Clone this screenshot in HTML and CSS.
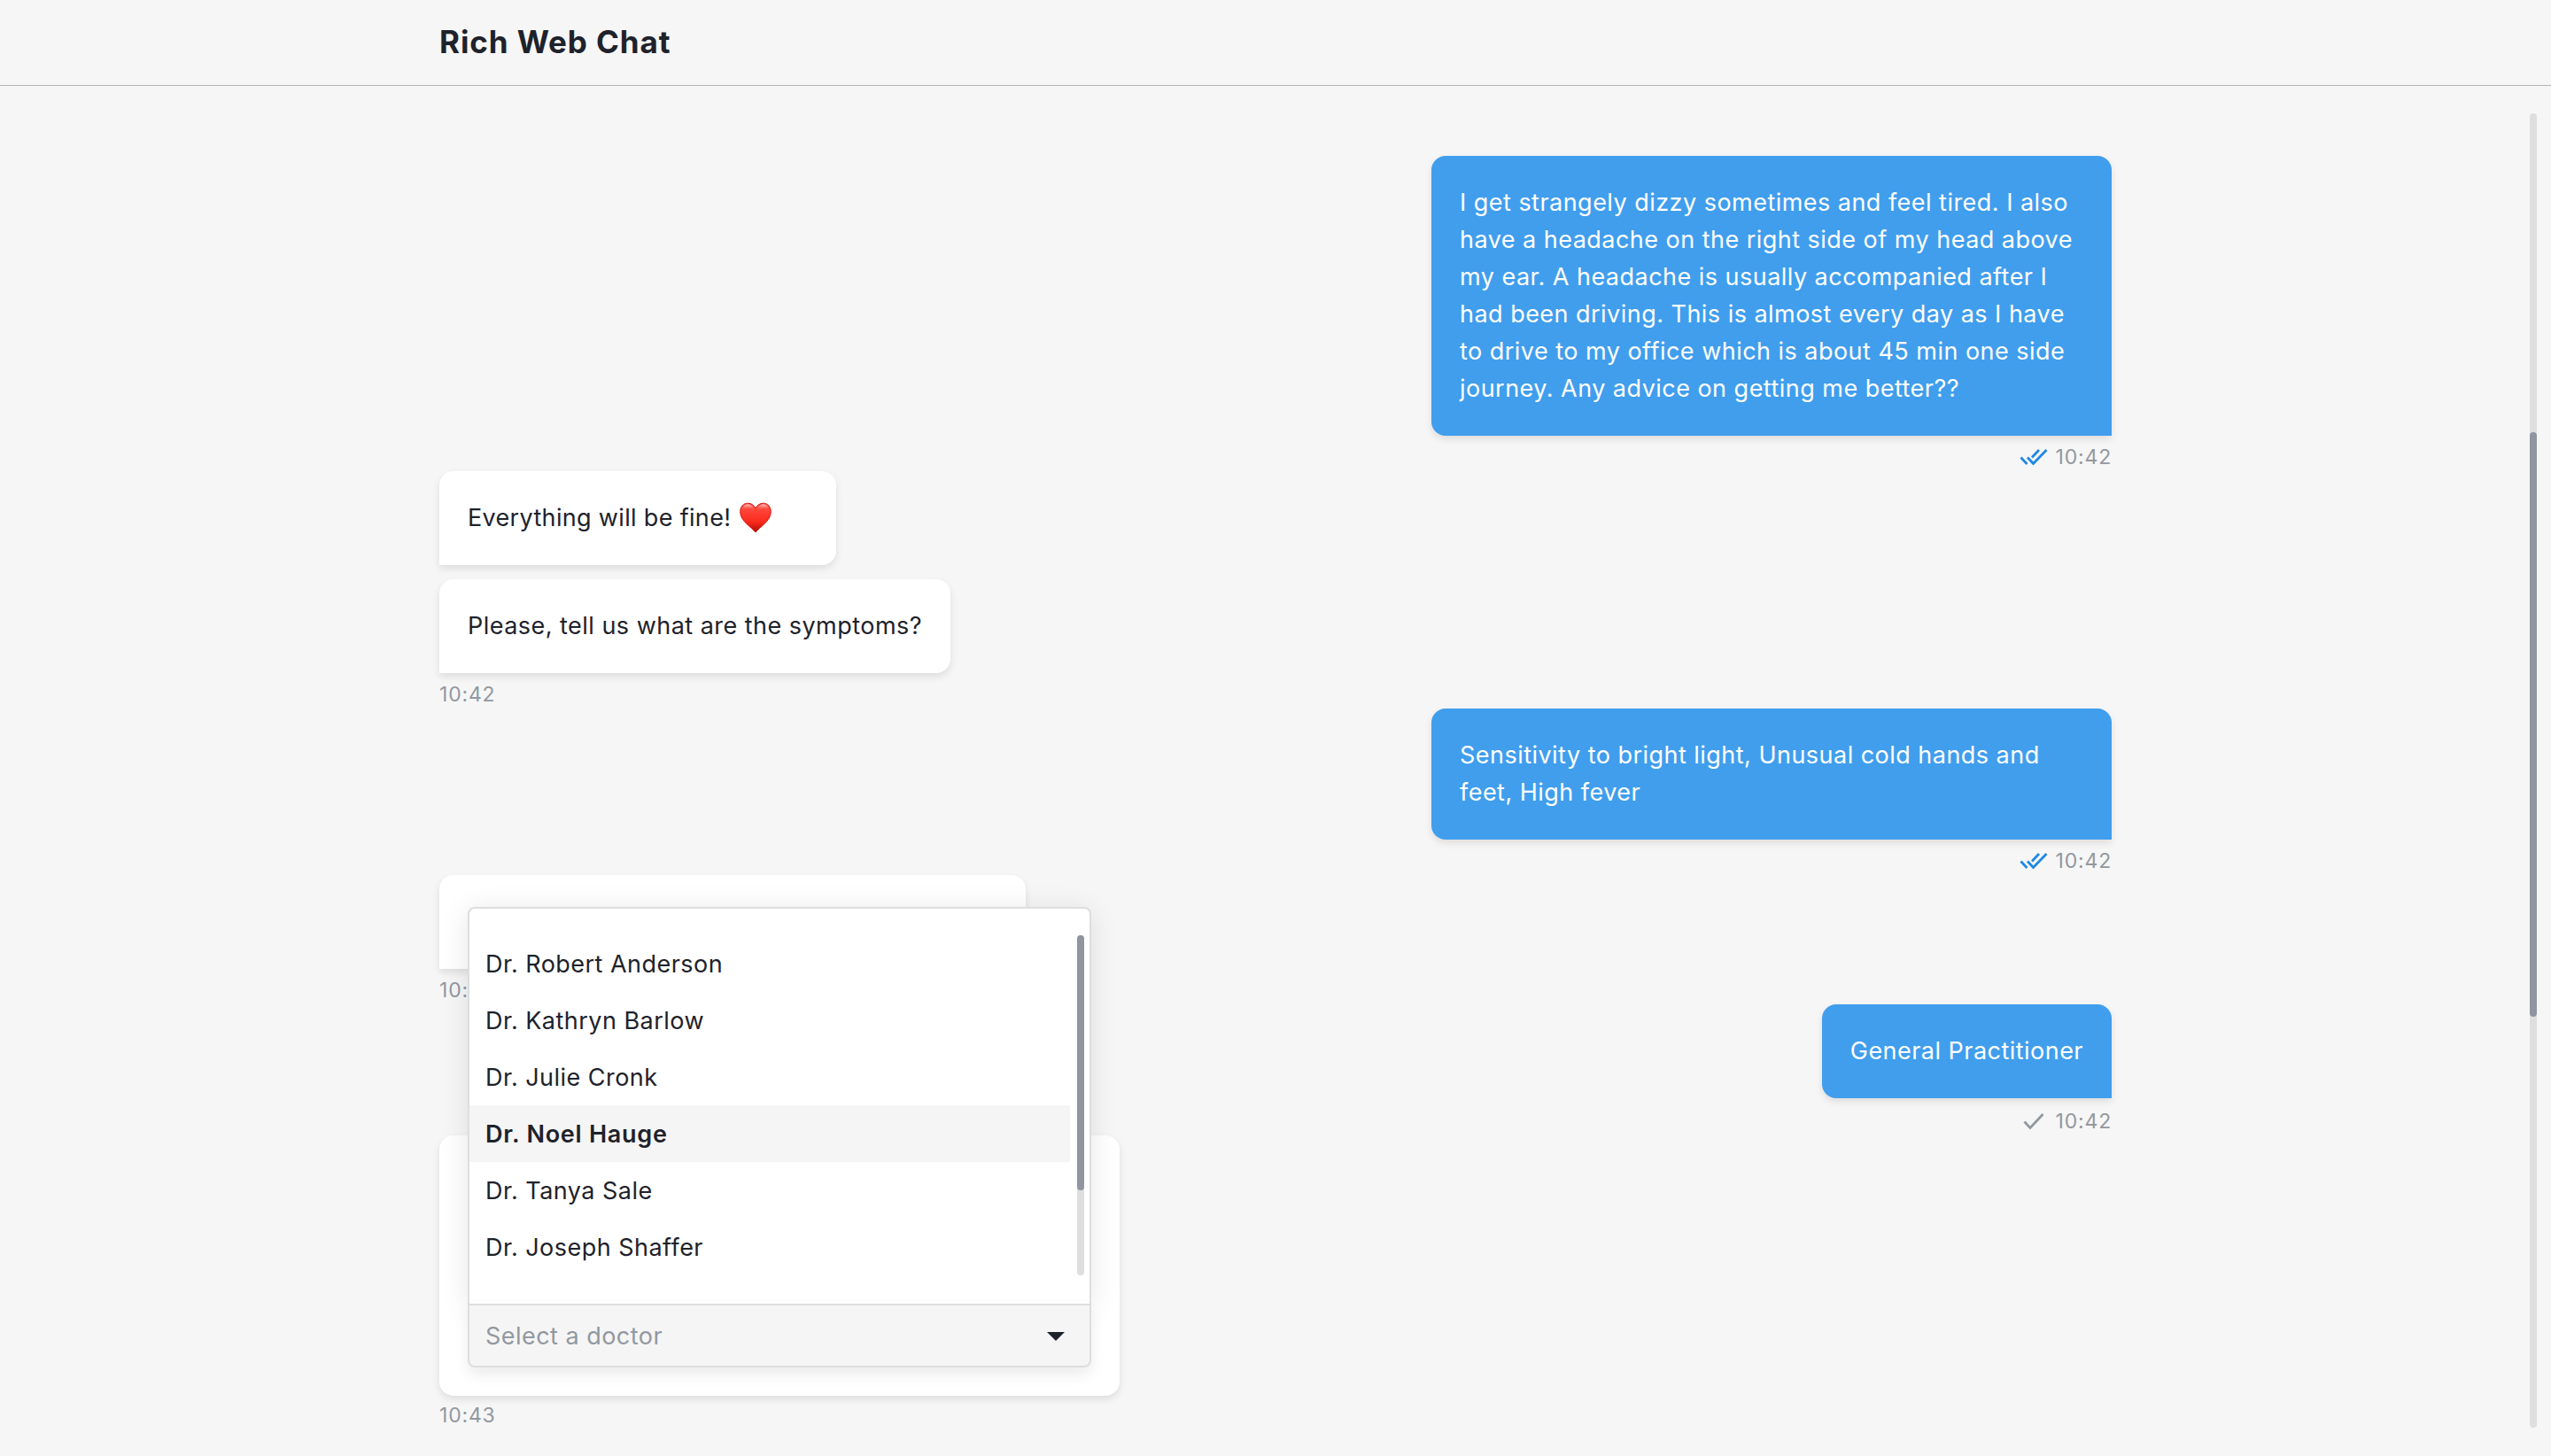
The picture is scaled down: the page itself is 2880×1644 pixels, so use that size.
FILE: index.html
```html
<!DOCTYPE html>
<html lang="en">
<head>
    <meta charset="UTF-8">
    <meta name="viewport" content="width=device-width, initial-scale=1.0">
    <title>Rich Web Chat</title>
    <link rel="stylesheet" href="styles.css">
</head>
<body>

    <header class="header">
        <h1>Rich Web Chat</h1>
    </header>

    <main class="chat">
        <div class="messages">
            <div class="message sent">
                <div class="bubble">I get strangely dizzy sometimes and feel tired. I also have a headache on the right side of my head above my ear. A headache is usually accompanied after I had been driving. This is almost every day as I have to drive to my office which is about 45 min one side journey. Any advice on getting me better??</div>
                <div class="meta">
                    <svg class="check read" viewBox="0 0 32 20"><path d="M1.500 10.500l7 7.500M9 10.500l6.500 7L30.500 2M22 2L14 10.500"/></svg>
                    <span>10:42</span>
                </div>
            </div>

            <div class="message received">
                <div class="bubble with-emoji">Everything will be fine!
                    <svg class="heart" viewBox="0 0 36 34">
                        <defs>
                            <linearGradient id="heartFill" x1="0" y1="0" x2="0" y2="1">
                                <stop offset="0" stop-color="#ff5a4e"/>
                                <stop offset="0.3" stop-color="#ff4034"/>
                                <stop offset="0.65" stop-color="#f92a1d"/>
                                <stop offset="1" stop-color="#a80d05"/>
                            </linearGradient>
                            <linearGradient id="heartShine" x1="0" y1="0" x2="0" y2="1">
                                <stop offset="0" stop-color="#ffe3e0" stop-opacity="0.9"/>
                                <stop offset="1" stop-color="#ff5a4e" stop-opacity="0"/>
                            </linearGradient>
                        </defs>
                        <path d="M18 33.5C14 28 .7 21 .7 10.200C.7 4.500 4.500.7 9.300.7C13.500.7 16.500 3.200 18 6.500C19.500 3.200 22.500.7 26.700.7C31.500.7 35.300 4.500 35.300 10.200C35.300 21 22 28 18 33.500Z" fill="url(#heartFill)" stroke="#d8150c" stroke-width="1"/>
                        <path d="M2.500 8C3.500 4 6 2 9.300 2C12.500 2 15 4 16.500 8ZM19.500 8C21 4 23.500 2 26.700 2C30 2 32.500 4 33.500 8Z" fill="url(#heartShine)"/>
                    </svg>
                </div>
                <div class="bubble">Please, tell us what are the symptoms?</div>
                <div class="meta"><span>10:42</span></div>
            </div>

            <div class="message sent">
                <div class="bubble">Sensitivity to bright light, Unusual cold hands and feet, High fever</div>
                <div class="meta">
                    <svg class="check read" viewBox="0 0 32 20"><path d="M1.500 10.500l7 7.500M9 10.500l6.500 7L30.500 2M22 2L14 10.500"/></svg>
                    <span>10:42</span>
                </div>
            </div>

            <div class="message received">
                <div class="bubble question"></div>
                <div class="meta"><span>10:42</span></div>
            </div>

            <div class="message sent">
                <div class="bubble">General Practitioner</div>
                <div class="meta pending">
                    <svg class="check" viewBox="0 0 24 20"><path d="M1.500 10.500l6.500 7L22.500 2"/></svg>
                    <span>10:42</span>
                </div>
            </div>

            <div class="message received">
                <div class="bubble form">
                    <div class="select">
                        <div class="options">
                            <ul>
                                <li>Dr. Robert Anderson</li>
                                <li>Dr. Kathryn Barlow</li>
                                <li>Dr. Julie Cronk</li>
                                <li class="active">Dr. Noel Hauge</li>
                                <li>Dr. Tanya Sale</li>
                                <li>Dr. Joseph Shaffer</li>
                            </ul>
                            <div class="scrollbar"><div class="thumb"></div></div>
                        </div>
                        <div class="select-value">
                            <span>Select a doctor</span>
                            <i class="caret"></i>
                        </div>
                    </div>
                </div>
                <div class="meta last"><span>10:43</span></div>
            </div>
        </div>

        <div class="scrollbar page-scrollbar"><div class="thumb"></div></div>
    </main>

</body>
</html>
```
FILE: styles.css
```css
* {
    box-sizing: border-box;
}
body {
    margin: 0;
    height: 1644px;
    overflow: hidden;
    background-color: #f6f6f6;
    color: #1e222b;
    font-family: Inter, sans-serif;
    font-size: 27px;
    line-height: 42px;
    letter-spacing: 0.47px;
}
.header {
    height: 97px;
    padding: 20px 496px 0;
    border-bottom: 1px solid #b5b5b5;
}
.header h1 {
    margin: 0;
    font-size: 35px;
    line-height: 54px;
    font-weight: 700;
    letter-spacing: 0.9px;
}
.chat {
    display: flex;
    justify-content: space-between;
    height: 1547px;
    padding-right: 16px;
}
.messages {
    width: 1888px;
    margin-left: 496px;
    padding-top: 79px;
}
.message {
    display: flex;
    flex-direction: column;
    align-items: flex-start;
}
.message.sent {
    align-items: flex-end;
}
.bubble {
    max-width: 768px;
    padding: 32px;
    background: white;
    border-radius: 16px 16px 16px 0;
    box-shadow: 0 4px 8px rgba(0, 0, 0, 0.1);
}
.bubble + .bubble {
    margin-top: 16px;
}
.sent .bubble {
    background: #409eed;
    color: white;
    border-radius: 16px 16px 0 16px;
}
.with-emoji {
    width: 448px;
    height: 106px;
    letter-spacing: 0.33px;
}
.heart {
    width: 36px;
    height: 35px;
    margin-left: 2px;
    vertical-align: -8px;
}
.question {
    width: 662px;
    height: 106px;
}
.meta {
    display: flex;
    align-items: center;
    height: 40px;
    padding-top: 8px;
    font-size: 23px;
    line-height: 32px;
    letter-spacing: 0.8px;
    color: #9298a0;
}
.meta.pending {
    height: 42px;
    padding-top: 10px;
}
.meta.last {
    padding-top: 4px;
}
.check {
    width: 24px;
    height: 20px;
    margin-right: 13px;
    fill: none;
    stroke: #9298a0;
    stroke-width: 2.8;
}
.check.read {
    width: 32px;
    margin-right: 9px;
    stroke: #1e88e5;
}
.form {
    display: flex;
    align-items: flex-end;
    width: 768px;
    height: 294px;
    border-radius: 16px;
}
/* the list opens upwards, over the messages above */
.select {
    position: relative;
    width: 704px;
    height: 72px;
}
.options {
    position: absolute;
    left: 0;
    bottom: 70px;
    display: flex;
    justify-content: space-between;
    width: 704px;
    height: 450px;
    padding: 30px 6px 32px 0;
    background: white;
    border: 2px solid #dedede;
    border-radius: 8px 8px 0 0;
    box-shadow: 0 4px 32px rgba(0, 0, 0, 0.1);
}
.options ul {
    width: 678px;
    margin: 0;
    padding: 0;
    list-style: none;
}
.options li {
    padding: 12px 18px 10px;
}
.options .active {
    background: #f5f5f5;
    font-weight: 600;
    letter-spacing: 0.75px;
}
.select-value {
    position: relative;
    display: flex;
    align-items: center;
    justify-content: space-between;
    height: 72px;
    padding: 1px 28px 0 18px;
    background: #f5f5f5;
    border: 2px solid #dedede;
    border-radius: 0 0 8px 8px;
    color: #9298a0;
    box-shadow: 0 8px 16px rgba(0, 0, 0, 0.08);
}
.caret {
    border: 10px solid transparent;
    border-top-color: #1e222b;
    border-bottom: 0;
}
.scrollbar {
    width: 8px;
    height: 384px;
    background: #dedede;
    border-radius: 4px;
}
.thumb {
    height: 288px;
    background: #9095a0;
    border-radius: 4px;
}
.page-scrollbar {
    height: 1484px;
    margin-top: 31px;
    padding-top: 360px;
}
.page-scrollbar .thumb {
    height: 660px;
}
```
